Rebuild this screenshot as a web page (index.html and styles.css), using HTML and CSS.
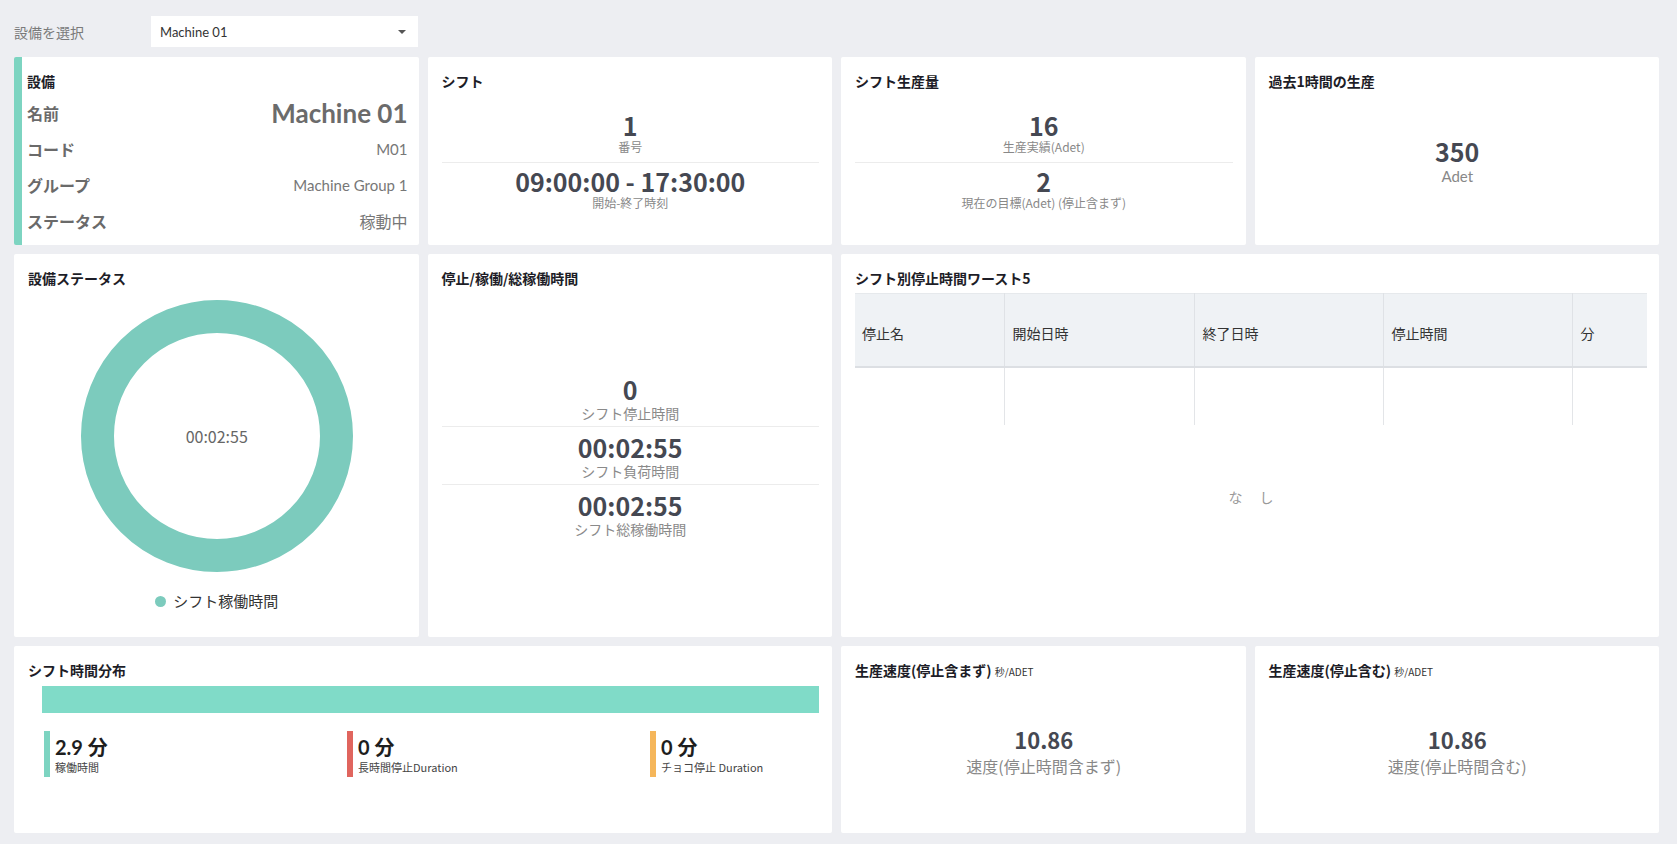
FILE: index.html
```html
<!DOCTYPE html>
<html lang="ja">
<head>
<meta charset="utf-8">
<title>設備ダッシュボード</title>
<link rel="stylesheet" href="styles.css">
</head>
<body>
<div class="page">
  <div class="topbar">
    <span class="top-label">設備を選択</span>
    <div class="select"><span>Machine 01</span><span class="caret"></span></div>
  </div>

  <div class="grid">
    <section class="card card-machine">
      <h3 class="card-title">設備</h3>
      <div class="kv first"><span class="k">名前</span><span class="v v-big">Machine 01</span></div>
      <div class="kv"><span class="k">コード</span><span class="v">M01</span></div>
      <div class="kv"><span class="k">グループ</span><span class="v">Machine Group 1</span></div>
      <div class="kv"><span class="k">ステータス</span><span class="v v-jp">稼動中</span></div>
    </section>

    <section class="card">
      <h3 class="card-title">シフト</h3>
      <div class="body-center">
        <div class="stat stat-top">
          <div class="num">1</div>
          <div class="lbl">番号</div>
        </div>
        <div class="stat stat-bottom">
          <div class="num">09:00:00 - 17:30:00</div>
          <div class="lbl">開始-終了時刻</div>
        </div>
      </div>
    </section>

    <section class="card">
      <h3 class="card-title">シフト生産量</h3>
      <div class="body-center">
        <div class="stat stat-top">
          <div class="num">16</div>
          <div class="lbl">生産実績(Adet)</div>
        </div>
        <div class="stat stat-bottom">
          <div class="num">2</div>
          <div class="lbl">現在の目標(Adet) (停止含まず)</div>
        </div>
      </div>
    </section>

    <section class="card">
      <h3 class="card-title">過去1時間の生産</h3>
      <div class="body-center">
        <div class="stat">
          <div class="num num-hour">350</div>
          <div class="lbl lbl-adet">Adet</div>
        </div>
      </div>
    </section>

    <section class="card">
      <h3 class="card-title">設備ステータス</h3>
      <div class="body-center donut-wrap">
        <div class="donut"><span>00:02:55</span></div>
        <div class="legend"><span class="dot"></span><span>シフト稼働時間</span></div>
      </div>
    </section>

    <section class="card">
      <h3 class="card-title">停止/稼働/総稼働時間</h3>
      <div class="body-center">
        <div class="tstat">
          <div class="num">0</div>
          <div class="lbl-lg">シフト停止時間</div>
        </div>
        <div class="tstat">
          <div class="num">00:02:55</div>
          <div class="lbl-lg">シフト負荷時間</div>
        </div>
        <div class="tstat last">
          <div class="num">00:02:55</div>
          <div class="lbl-lg">シフト総稼働時間</div>
        </div>
      </div>
    </section>

    <section class="card span2">
      <h3 class="card-title">シフト別停止時間ワースト5</h3>
      <table class="worst">
        <colgroup>
          <col class="c1"><col class="c2"><col class="c3"><col class="c4"><col class="c5">
        </colgroup>
        <thead>
          <tr><th>停止名</th><th>開始日時</th><th>終了日時</th><th>停止時間</th><th>分</th></tr>
        </thead>
        <tbody>
          <tr><td></td><td></td><td></td><td></td><td></td></tr>
        </tbody>
      </table>
      <div class="empty">なし</div>
    </section>

    <section class="card span2">
      <h3 class="card-title">シフト時間分布</h3>
      <div class="dist-bar"></div>
      <div class="dist-stats">
        <div class="dstat green"><div class="dnum">2.9 分</div><div class="dlbl">稼働時間</div></div>
        <div class="dstat red"><div class="dnum">0 分</div><div class="dlbl">長時間停止Duration</div></div>
        <div class="dstat orange"><div class="dnum">0 分</div><div class="dlbl">チョコ停止 Duration</div></div>
      </div>
    </section>

    <section class="card">
      <h3 class="card-title">生産速度(停止含まず) <small class="unit">秒/ADET</small></h3>
      <div class="body-center">
        <div class="stat">
          <div class="num num-speed">10.86</div>
          <div class="lbl-speed">速度(停止時間含まず)</div>
        </div>
      </div>
    </section>

    <section class="card">
      <h3 class="card-title">生産速度(停止含む) <small class="unit">秒/ADET</small></h3>
      <div class="body-center">
        <div class="stat">
          <div class="num num-speed">10.86</div>
          <div class="lbl-speed">速度(停止時間含む)</div>
        </div>
      </div>
    </section>
  </div>
</div>
</body>
</html>
```

FILE: styles.css
```css
html, body {
  margin: 0;
  padding: 0;
}

body {
  background: #edeef2;
  font-family: "Noto Sans CJK JP", "Noto Sans", sans-serif;
  color: #333;
}

.page {
  padding: 16px 18px 11px 14px;
}

.topbar {
  display: flex;
  align-items: center;
  height: 31px;
  margin-bottom: 10px;
}

.top-label {
  width: 137px;
  font-size: 14px;
  color: #7a7a7a;
}

.select {
  width: 267px;
  height: 31px;
  box-sizing: border-box;
  background: #fff;
  display: flex;
  align-items: center;
  justify-content: space-between;
  padding: 0 12px 0 9px;
  font-family: Lato, "Noto Sans CJK JP", sans-serif;
  font-size: 13px;
  color: #333;
}

.caret {
  width: 0;
  height: 0;
  border-left: 4px solid transparent;
  border-right: 4px solid transparent;
  border-top: 4px solid #555;
}

.grid {
  display: grid;
  grid-template-columns: repeat(4, 1fr);
  grid-template-rows: 188px 383px 187px;
  gap: 9px;
}

.card {
  background: #fff;
  border-radius: 2px;
  padding: 14px 13px 14px 14px;
  box-sizing: border-box;
  display: flex;
  flex-direction: column;
  min-width: 0;
}

.span2 {
  grid-column: span 2;
}

.card-title {
  margin: 0;
  flex-shrink: 0;
  font-size: 14px;
  line-height: 20px;
  font-weight: 700;
  color: #1d1d27;
}

.unit {
  font-size: 10px;
  font-weight: 400;
  color: #333;
}

/* machine card */
.card-machine {
  border-left: 8px solid #7dd4c1;
  padding: 14px 11px 0 5px;
}

.kv {
  flex-shrink: 0;
  display: flex;
  justify-content: space-between;
  align-items: center;
  height: 36px;
}

.kv.first {
  margin-top: 4px;
}

.k {
  font-size: 16px;
  font-weight: 700;
  color: #6a6a6a;
}

.v {
  font-family: Lato, "Noto Sans CJK JP", sans-serif;
  font-size: 15px;
  color: #777;
}

.v-jp {
  font-size: 16px;
}

.v-big {
  font-size: 26px;
  font-weight: 700;
  color: #6b6b6b;
}

/* centered stats */
.body-center {
  flex: 1;
  display: flex;
  flex-direction: column;
  justify-content: center;
}

.stat {
  text-align: center;
}

.stat-top {
  padding-bottom: 7px;
  border-bottom: 1px solid #ececec;
}

.stat-bottom {
  padding-top: 4px;
}

.num {
  font-size: 25px;
  line-height: 28px;
  font-weight: 700;
  color: #454852;
}

.lbl {
  font-size: 12px;
  line-height: 16px;
  color: #888;
}

.num-hour {
  line-height: 30px;
}

.lbl-adet {
  font-family: Lato, "Noto Sans CJK JP", sans-serif;
  font-size: 15px;
  line-height: 20px;
}

/* time stats */
.tstat {
  text-align: center;
  padding: 5px 0 4px;
  border-bottom: 1px solid #ececec;
}

.tstat.last {
  border-bottom: none;
}

.tstat .num {
  line-height: 30px;
}

.lbl-lg {
  font-size: 14px;
  line-height: 18px;
  color: #8a8a8a;
}

/* donut */
.donut-wrap {
  align-items: center;
}

.donut {
  width: 272px;
  height: 272px;
  box-sizing: border-box;
  border: 33px solid #7ccbbd;
  border-radius: 50%;
  display: flex;
  align-items: center;
  justify-content: center;
  font-size: 16px;
  color: #666;
}

.legend {
  margin-top: 19px;
  display: flex;
  align-items: center;
  gap: 7px;
  font-size: 15px;
  line-height: 20px;
  color: #333;
}

.dot {
  width: 11px;
  height: 11px;
  border-radius: 50%;
  background: #7ccbbd;
}

/* table */
.worst {
  margin-top: 5px;
  width: 792px;
  border-collapse: collapse;
  table-layout: fixed;
}

.c1 { width: 149px; }
.c2 { width: 190px; }
.c3 { width: 189px; }
.c4 { width: 189px; }
.c5 { width: 75px; }

.worst th {
  height: 73px;
  box-sizing: border-box;
  background: #eff2f5;
  border-top: 1px solid #e6e9ec;
  border-bottom: 2px solid #dcdfe3;
  border-right: 1px solid #dfe2e6;
  text-align: left;
  font-weight: 400;
  font-size: 14px;
  color: #333;
  padding: 6px 8px 0;
  vertical-align: middle;
}

.worst th:first-child {
  padding-left: 7px;
}

.worst th:last-child,
.worst td:last-child {
  border-right: none;
}

.worst td {
  height: 57px;
  border-right: 1px solid #e3e5e8;
  padding: 0;
}

.empty {
  padding-top: 62px;
  padding-left: 17px;
  text-align: center;
  width: 792px;
  box-sizing: border-box;
  font-size: 14px;
  line-height: 20px;
  letter-spacing: 17px;
  color: #999;
}

/* distribution */
.dist-bar {
  flex-shrink: 0;
  margin: 6px 0 0 14px;
  height: 27px;
  background: #80dbc8;
}

.dist-stats {
  display: grid;
  grid-template-columns: 303px 303px 303px;
  margin: 18px 0 0 16px;
}

.dstat {
  height: 46px;
  box-sizing: border-box;
  border-left: 6px solid #7dd4c1;
  padding: 3px 0 0 5px;
}

.dstat.red { border-left-color: #e0655e; }
.dstat.orange { border-left-color: #f5b65a; }

.dnum {
  font-family: Lato, "Noto Sans CJK JP", sans-serif;
  font-size: 20px;
  line-height: 26px;
  font-weight: 700;
  color: #1e1e1e;
}

.dlbl {
  font-size: 11px;
  line-height: 14px;
  color: #444;
}

/* speed */
.num-speed {
  font-size: 22px;
  line-height: 30px;
}

.lbl-speed {
  font-size: 16px;
  line-height: 24px;
  color: #888;
}
```
